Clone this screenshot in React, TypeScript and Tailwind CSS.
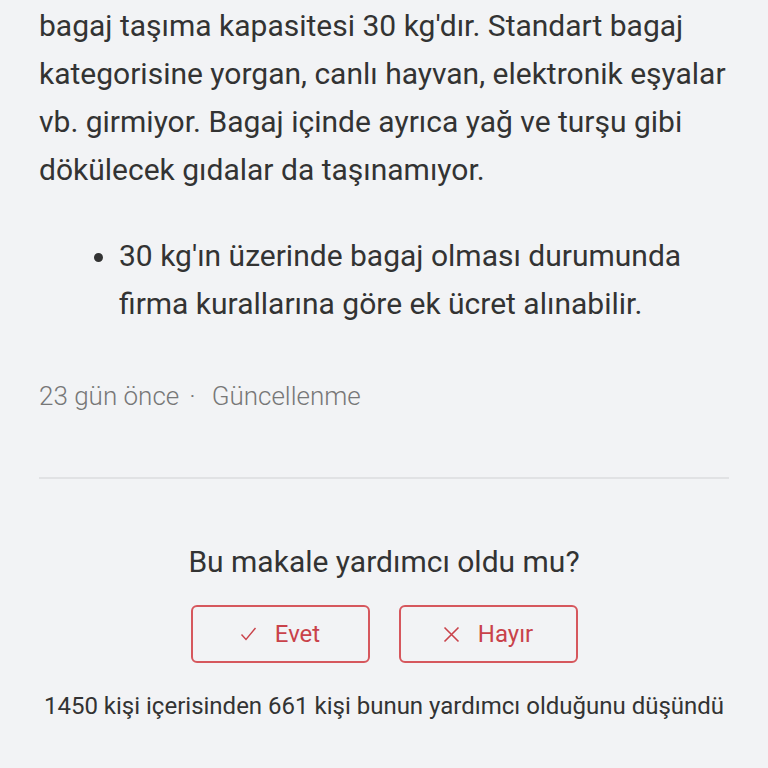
import React from 'react'

export default function App() {
  return (
    <div
      className="w-[768px] h-[768px] overflow-hidden bg-[#f2f3f5] text-[#333]"
      style={{ fontFamily: 'Roboto, "Noto Sans", sans-serif' }}
    >
      <div className="px-[39px]">
        <p className="text-[30px] leading-[48px] mt-[2px]">
          bagaj taşıma kapasitesi 30 kg'dır. Standart bagaj kategorisine yorgan, canlı hayvan, elektronik eşyalar
          vb. girmiyor. Bagaj içinde ayrıca yağ ve turşu gibi dökülecek gıdalar da taşınamıyor.
        </p>
        <ul className="mt-[38px] pl-[80px] list-disc text-[30px] leading-[48px] marker:text-[#333]">
          <li>
            30 kg'ın üzerinde bagaj olması durumunda firma kurallarına göre ek ücret alınabilir.
          </li>
        </ul>
        <div className="mt-[50px] flex items-center text-[26px] leading-[36px] font-light text-[#777]">
          <span>23 gün önce</span>
          <span className="mx-[10px]">·</span>
          <span className="ml-[6px]">Güncellenme</span>
        </div>
        <div className="mt-[63px] h-[2px] bg-[#e1e2e4]" />
        <div className="mt-[63px] text-center text-[30px] leading-[40px]">Bu makale yardımcı oldu mu?</div>
        <div className="mt-[23px] flex justify-center gap-[29px]">
          <button className="w-[179px] h-[58px] rounded-[6px] border-[2px] border-[#d6575d] flex items-center justify-center gap-[18px] text-[#c9424a] text-[24px]">
            <svg width="17" height="14" viewBox="0 0 17 14" fill="none">
              <path d="M1.5 7.5 L6 12.5 L15.5 1" stroke="#c9424a" strokeWidth="1.4" />
            </svg>
            <span>Evet</span>
          </button>
          <button className="w-[179px] h-[58px] rounded-[6px] border-[2px] border-[#d6575d] flex items-center justify-center gap-[18px] text-[#c9424a] text-[24px]">
            <svg width="17" height="17" viewBox="0 0 17 17" fill="none">
              <path d="M1.5 1.5 L15.5 15.5 M15.5 1.5 L1.5 15.5" stroke="#c9424a" strokeWidth="1.6" />
            </svg>
            <span>Hayır</span>
          </button>
        </div>
        <div className="mt-[27px] text-center text-[24px] leading-[32px] text-[#333]">
          1450 kişi içerisinden 661 kişi bunun yardımcı olduğunu düşündü
        </div>
      </div>
    </div>
  )
}
